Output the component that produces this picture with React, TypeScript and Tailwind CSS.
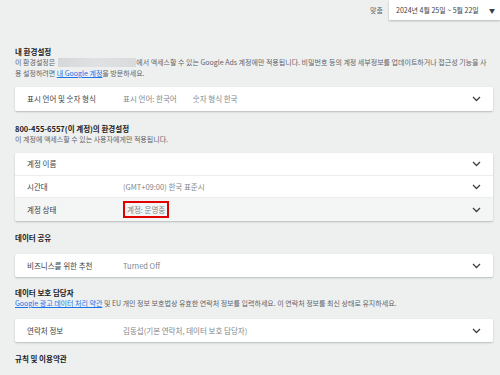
import React from "react";

const font = { fontFamily: '"Noto Sans CJK KR", "Noto Sans", sans-serif' };

function Chevron() {
  return (
    <svg width="9" height="6" viewBox="0 0 9 6" className="shrink-0">
      <path d="M1 1l3.5 3.5L8 1" fill="none" stroke="#3c4043" strokeWidth="1.3" />
    </svg>
  );
}

function Row({ label, value, extra, gray, boxed, h = "h-[24px]" }: { label: string; value?: React.ReactNode; extra?: string; gray?: boolean; boxed?: boolean; h?: string }) {
  return (
    <div className={`flex items-center ${h} pl-[12px] pr-[12px] ${gray ? "bg-[#f4f5f5]" : "bg-white"}`}>
      <div className="w-[96px] text-[#3c4043] text-[7.5px]">{label}</div>
      <div className="flex-1 flex items-center text-[#80868b] text-[7.5px]">
        {boxed ? (
          <span className="border-2 border-[#e00000] px-[2px] py-[1px] leading-[11px]">{value}</span>
        ) : (
          <span>{value}</span>
        )}
        {extra && <span className="ml-[16px]">{extra}</span>}
      </div>
      <Chevron />
    </div>
  );
}

export default function App() {
  return (
    <div style={font} className="w-[500px] h-[375px] overflow-hidden bg-[#eef0f0] text-[#202124]">
      {/* 상단 날짜 */}
      <div className="flex justify-end items-center h-[20px]">
        <span className="text-[7px] text-[#5f6368] mr-[6px]">맞춤</span>
        <div className="w-[111px] h-[20px] bg-white shadow-[0_1px_2px_rgba(0,0,0,0.25)] flex items-center justify-between pl-[7px] pr-[5px]">
          <span className="text-[7px] text-[#3c4043]">2024년 4월 25일 ~ 5월 22일</span>
          <span className="text-[6px] text-[#3c4043]">▼</span>
        </div>
      </div>

      <div className="pl-[15px] pr-[7px]">
        <div className="mt-[26px] text-[7.5px] font-bold leading-[11px]">내 환경설정</div>
        <div className="text-[7px] leading-[11px] text-[#5f6368] whitespace-nowrap">
          <div className="flex items-center">
            <span>이 환경설정은</span>
            <span className="inline-block w-[78px] h-[9px] ml-[3px] bg-gradient-to-r from-[#d6d7d8] via-[#e0e1e2] to-[#d9dadb]"></span>
            <span>에서 액세스할 수 있는 Google Ads 계정에만 적용됩니다. 비밀번호 등의 계정 세부정보를 업데이트하거나 접근성 기능을 사</span>
          </div>
          <div>
            용 설정하려면 <span className="text-[#1a73e8] underline">내 Google 계정</span>을 방문하세요.
          </div>
        </div>

        <div className="mt-[8px] rounded-[2px] overflow-hidden shadow-[0_1px_2px_rgba(60,64,67,0.3)]">
          <Row label="표시 언어 및 숫자 형식" value="표시 언어: 한국어" extra="숫자 형식 한국" />
        </div>

        <div className="mt-[12px] text-[7.5px] font-bold leading-[11px]">800-455-6557(이 계정)의 환경설정</div>
        <div className="text-[7px] leading-[10px] text-[#5f6368]">이 계정에 액세스할 수 있는 사용자에게만 적용됩니다.</div>

        <div className="mt-[9px] rounded-[2px] overflow-hidden shadow-[0_1px_2px_rgba(60,64,67,0.3)] divide-y divide-[#eceeee]">
          <Row label="계정 이름" h="h-[23px]" />
          <Row label="시간대" value="(GMT+09:00) 한국 표준시" h="h-[22px]" />
          <Row label="계정 상태" value="계정: 운영중" gray boxed h="h-[23px]" />
        </div>

        <div className="mt-[11px] text-[7.5px] font-bold leading-[11px]">데이터 공유</div>

        <div className="mt-[11px] rounded-[2px] overflow-hidden shadow-[0_1px_2px_rgba(60,64,67,0.3)]">
          <Row label="비즈니스를 위한 추천" value="Turned Off" h="h-[23px]" />
        </div>

        <div className="mt-[10px] text-[7.5px] font-bold leading-[11px]">데이터 보호 담당자</div>
        <div className="text-[7px] leading-[11px] text-[#5f6368] whitespace-nowrap">
          <span className="text-[#1a73e8] underline">Google 광고 데이터 처리 약관</span> 및 EU 개인 정보 보호법상 유효한 연락처 정보를 입력하세요. 이 연락처 정보를 최신 상태로 유지하세요.
        </div>

        <div className="mt-[10px] rounded-[2px] overflow-hidden shadow-[0_1px_2px_rgba(60,64,67,0.3)]">
          <Row label="연락처 정보" value="김동섭(기본 연락처, 데이터 보호 담당자)" h="h-[23px]" />
        </div>

        <div className="mt-[11px] text-[7.5px] font-bold leading-[11px]">규칙 및 이용약관</div>
      </div>
    </div>
  );
}
